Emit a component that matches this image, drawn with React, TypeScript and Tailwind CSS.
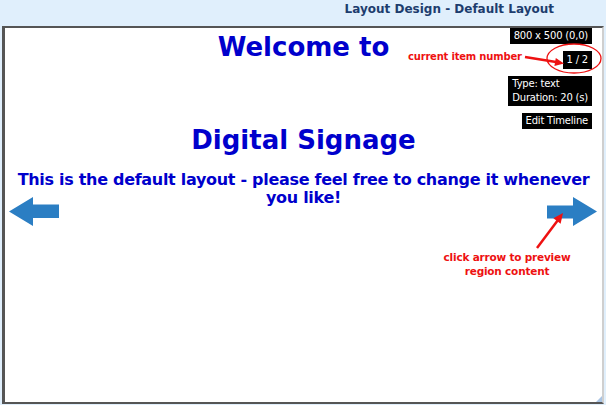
import React from "react";

const infoBox =
  "bg-black text-white text-[10px] leading-[14px] tracking-[-0.2px] px-[4px] py-[1px] whitespace-nowrap";

function LeftArrow() {
  return (
    <svg width="50" height="29" viewBox="0 0 50 29">
      <polygon points="0,14.5 24,0 24,7.5 50,7.5 50,21 24,21 24,29" fill="#2b7ec3" />
    </svg>
  );
}

function RightArrow() {
  return (
    <svg width="50" height="29" viewBox="0 0 50 29">
      <polygon points="0,8.5 26,8.5 26,0 50,14.5 26,29 26,21.5 0,21.5" fill="#2b7ec3" />
    </svg>
  );
}

export default function App() {
  return (
    <div
      className="relative w-[606px] h-[405px] overflow-hidden bg-[#e0effc]"
      style={{ fontFamily: '"DejaVu Sans", Verdana, sans-serif' }}
    >
      {/* title bar */}
      <div className="h-[26px] flex justify-end pr-[52px] pt-[1px]">
        <span className="text-[12px] leading-[16px] font-bold text-[#1d3d6e]">
          Layout Design - Default Layout
        </span>
      </div>

      {/* layout preview */}
      <div className="relative mx-[2px] h-[378px] bg-white border-t-2 border-l-[3px] border-b-2 border-r-2 border-t-[#555] border-l-[#555] border-b-[#555] border-r-[#cfcfcf]">
        <div className="flex flex-col items-center text-center text-[#0000cc] font-bold pt-[4px]">
          <div className="text-[26px] leading-[31px]">Welcome to</div>
          <div className="text-[26px] leading-[31px] mt-[62px]">Digital Signage</div>
          <p className="text-[16px] leading-[18px] tracking-[-0.3px] mt-[15px]">
            This is the default layout - please feel free to change it whenever you like!
          </p>
        </div>

        <button className="absolute left-[4px] top-[169px]">
          <LeftArrow />
        </button>
        <button className="absolute left-[542px] top-[169px]">
          <RightArrow />
        </button>

        <div className="absolute top-0 right-[10px] flex flex-col items-end gap-[7px]">
          <div className={infoBox}>800 x 500 (0,0)</div>
          <div className={`${infoBox} py-[2px]`}>1 / 2</div>
          <div className={`${infoBox} leading-[13px] py-[1px]`}>
            Type: text
            <br />
            Duration: 20 (s)
          </div>
          <div className={`${infoBox} py-[1px]`}>Edit Timeline</div>
        </div>

        {/* resize grip */}
        <svg className="absolute right-0 bottom-0" width="6" height="6" viewBox="0 0 6 6">
          <polygon points="6,0 6,6 0,6" fill="#a9c4e4" />
        </svg>
      </div>

      {/* annotations */}
      <div className="absolute left-[408px] top-[51px] text-[10px] leading-[12px] tracking-[-0.2px] font-bold text-[#ee1111] whitespace-nowrap">
        current item number
      </div>
      <div className="absolute left-[432px] top-[250px] w-[150px] text-center text-[10.5px] leading-[14px] tracking-[-0.2px] font-bold text-[#ee1111]">
        click arrow to preview
        <br />
        region content
      </div>
      <svg
        className="absolute inset-0 pointer-events-none"
        width="606"
        height="405"
        viewBox="0 0 606 405"
      >
        <line x1="525" y1="57" x2="556" y2="62" stroke="#ee1111" strokeWidth="2.5" />
        <polygon points="564,63.5 555.8,58.1 554.4,65.9" fill="#ee1111" />
        <ellipse cx="574" cy="58.5" rx="27" ry="14.5" fill="none" stroke="#ee1111" strokeWidth="1.3" />
        <line x1="537" y1="248" x2="558" y2="220" stroke="#ee1111" strokeWidth="2.5" />
        <polygon points="563,213 560.6,223.7 553.4,218.3" fill="#ee1111" />
      </svg>
    </div>
  );
}
